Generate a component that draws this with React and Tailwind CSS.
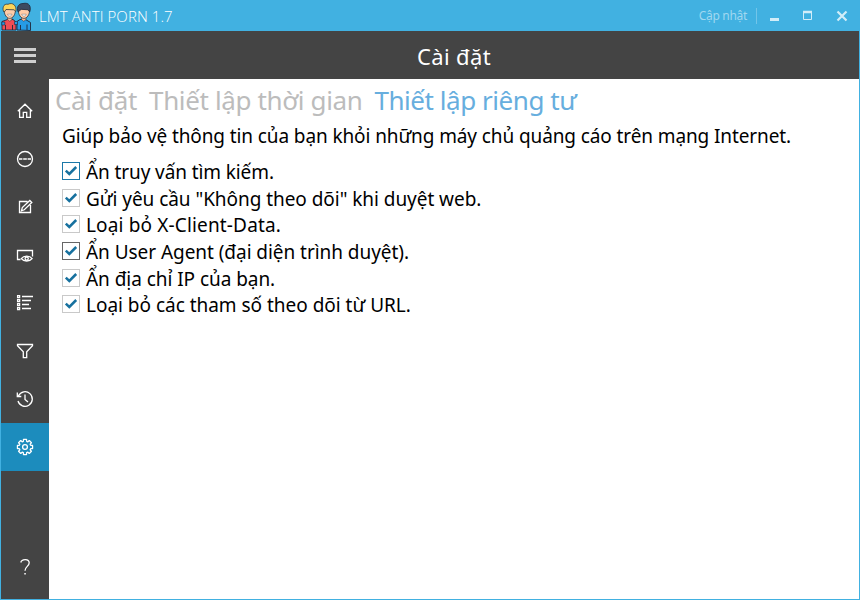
import React from "react";

const stroke = { fill: "none", stroke: "currentColor", strokeWidth: 1.3 };

function Glyph({ children }) {
  return (
    <svg width="18" height="18" viewBox="0 0 18 18" {...stroke}>
      {children}
    </svg>
  );
}

const gearPath = (() => {
  const pts = [];
  for (let i = 0; i < 8; i++) {
    const a = (i * Math.PI) / 4;
    [[-0.28, 5.9], [-0.2, 7.7], [0.2, 7.7], [0.28, 5.9]].forEach(([d, r]) => {
      pts.push(`${(9 + r * Math.sin(a + d)).toFixed(2)} ${(9 - r * Math.cos(a + d)).toFixed(2)}`);
    });
  }
  return `M${pts.join("L")}Z`;
})();

const icons = [
  <Glyph><path d="M1.8 9.2 9 2.2l7.2 7M3.6 7.8v7.6h3.7v-5h3.4v5h3.7V7.8" /></Glyph>,
  <Glyph>
    <circle cx="9" cy="9" r="7.5" />
    <path d="M3 9h3.400M7.200 9h3.600M11.600 9H15" strokeWidth="1.400" />
  </Glyph>,
  <Glyph>
    <path d="M11.500 3.500h-8v11h11V7M5.500 12.700l.8-3.200 7.500-7 2 2-7.500 7.300z" />
  </Glyph>,
  <Glyph>
    <path d="M4.5 13.5h-3v-9h15v6" />
    <path d="M5.3 12.6c2.5-3.2 8.3-3.2 10.8 0-2.5 3.2-8.3 3.2-10.8 0z" />
    <circle cx="10.7" cy="12.6" r="1.6" />
  </Glyph>,
  <Glyph>
    <path d="M1.6 1.6h2v2h-2zM1.6 5.6h2v2h-2zM1.6 9.6h2v2h-2zM1.6 13.6h2v2h-2z" />
    <path d="M6 2.5h11M6 6.5h9M6 10.5h7M6 14.5h9" />
  </Glyph>,
  <Glyph><path d="M1.5 2.5h15v1.3l-5.8 6v5.9H7.3V9.8l-5.8-6z" /></Glyph>,
  <Glyph>
    <path d="M2.5 5.7A7.3 7.3 0 1 1 2 11M1.3 2.5v4h4M9 4.6v4.9l3 2.6" />
  </Glyph>,
  <Glyph>
    <path d={gearPath} strokeLinejoin="round" />
    <circle cx="9" cy="9" r="2.4" />
  </Glyph>,
];

function People() {
  return (
    <svg width="30" height="30" viewBox="0 0 30 30" stroke="#20283a" strokeWidth="0.9" strokeLinejoin="round">
      <path d="M1 29v-8.500l5.500-2H12l3 2.500v8z" fill="#f14d55" />
      <path d="M16 29v-8.500l3-2h5.500l5 3v8z" fill="#269be5" />
      <path d="M.8 21h3v3h-3zM13.500 20.500h3v3h-3z" fill="#269be5" strokeWidth=".6" />
      <path d="M4.500 24V29M11.500 24v5M19.500 24v5M26 23.500V29" fill="none" />
      <path d="M6.500 15h4.500v3.500l-2.200 1.800-2.300-1.800zM20.500 15H25v3.500l-2.200 1.800-2.300-1.800z" fill="#f9bc94" strokeWidth=".5" />
      <path d="M3 8c0 12.500 11.500 12.500 11.500 0z" fill="#ffcca8" strokeWidth=".7" />
      <path d="M17.200 8c0 12.500 11.500 12.500 11.500 0z" fill="#ffcca8" strokeWidth=".7" />
      <path d="M2.500 10.500C.8 5 4 2.500 7 3.300 12 .8 16 5 14.800 10.500L13 8.800 5 8.500 3.800 10.500z" fill="#fcd45a" strokeWidth=".7" />
      <path d="M17.200 11C15 5.500 18 2.500 22 2.500 28 1.200 30.500 5 28.700 11L27 8.800l-6.500-.5-1.500 1z" fill="#3d4a60" strokeWidth=".8" />
      <path d="M6.500 13.200h4.500c-.5 2.500-4 2.500-4.500 0zM20.700 13.200h4.500c-.5 2.500-4 2.500-4.500 0z" fill="#fff" strokeWidth=".3" />
    </svg>
  );
}

const options = [
  { label: "Ẩn truy vấn tìm kiếm.", box: "border-[#1b78a8]", text: "tracking-[-0.1px]" },
  { label: 'Gửi yêu cầu "Không theo dõi" khi duyệt web.', box: "border-[#c9c9c9]", text: "tracking-[-0.05px]" },
  { label: "Loại bỏ X-Client-Data.", box: "border-[#c9c9c9]", text: "tracking-[0.15px]" },
  { label: "Ẩn User Agent (đại diện trình duyệt).", box: "border-[#666666]", text: "tracking-[-0.05px]" },
  { label: "Ẩn địa chỉ IP của bạn.", box: "border-[#c9c9c9]", text: "tracking-[-0.05px]" },
  { label: "Loại bỏ các tham số theo dõi từ URL.", box: "border-[#c9c9c9]", text: "tracking-[-0.02px]" },
];

function Option({ label, box, text }) {
  return (
    <label className="flex h-[26.6px] items-center whitespace-nowrap">
      <span className={`mb-[2px] flex size-[18px] shrink-0 items-center justify-center border bg-white ${box}`}>
        <svg width="14" height="14" viewBox="0 0 14 14" fill="none" stroke="#17719f" strokeWidth="2.5">
          <path d="M1.800 6.700 5.300 10 12.200 3" />
        </svg>
      </span>
      <span className={`ml-1.5 text-[19px] leading-[26px] text-black ${text}`}>{label}</span>
    </label>
  );
}

export default function App() {
  return (
    <div className="flex h-[600px] w-[860px] flex-col overflow-hidden border-x border-b border-[#41b1e1] bg-white font-['Noto_Sans',sans-serif]">
      <header className="flex h-[31px] shrink-0 items-center bg-[#41b1e1] text-white">
        <People />
        <span className="mt-px ml-2 whitespace-nowrap font-['Open_Sans',sans-serif] text-[15px] font-light tracking-[0.08px]">LMT ANTI PORN 1.7</span>
        <div className="ml-auto flex items-center">
          <span className="mt-px whitespace-nowrap text-[12px] tracking-[-0.3px] text-[#a0d8f0]">Cập nhật</span>
          <span className="ml-[9px] h-4 w-px bg-[#72c5e9]" />
          <svg className="ml-3" width="90" height="18" viewBox="0 0 90 18" fill="none" stroke="#d2edf8">
            <path d="M1 12.500h9" strokeWidth="3" />
            <path d="M34.500 4.500h8v8h-8z" />
            <path d="M34 5h9" strokeWidth="2.500" />
            <path d="M68.500 4.500l9 9M77.500 4.500l-9 9" strokeWidth="2.200" />
          </svg>
        </div>
      </header>
      <div className="flex h-12 shrink-0 items-center bg-[#444444] text-white">
        <div className="flex w-12 flex-col items-center gap-[3px] pt-px">
          <span className="h-[3px] w-[22px] bg-[#cfcfcf]" />
          <span className="h-[3px] w-[22px] bg-[#cfcfcf]" />
          <span className="h-[3px] w-[22px] bg-[#cfcfcf]" />
        </div>
        <h1 className="flex-1 pt-[3px] text-center text-[22px] tracking-[0.35px]">Cài đặt</h1>
      </div>
      <div className="flex min-h-0 flex-1">
        <nav className="flex w-12 shrink-0 flex-col bg-[#444444] pt-2 pb-2 text-white">
          {icons.map((icon, i) => (
            <button key={i} className={`flex h-12 w-12 shrink-0 items-center justify-center ${i === 7 ? "bg-[#1c8cbd]" : ""}`}>
              {icon}
            </button>
          ))}
          <button className="mt-auto flex h-12 w-12 shrink-0 items-center justify-center">
            <Glyph>
              <path d="M4.800 4.500C5.500 1 13 .2 13.200 4.800 13.200 8.500 9 8.300 9 12.800" />
              <path d="M8.300 15.800h1.500" strokeWidth="1.500" />
            </Glyph>
          </button>
        </nav>
        <main className="flex-1">
          <div className="flex h-[43px] items-center gap-3 pl-1.5 text-[26px] whitespace-nowrap text-[#bcbcbc]">
            <span className="tracking-[-0.35px]">Cài đặt</span>
            <span className="tracking-[-0.37px]">Thiết lập thời gian</span>
            <span className="tracking-[-0.45px] text-[#67aede]">Thiết lập riêng tư</span>
          </div>
          <p className="pl-[13px] text-[19px] leading-[28px] tracking-[-0.105px] whitespace-nowrap text-black">
            Giúp bảo vệ thông tin của bạn khỏi những máy chủ quảng cáo trên mạng Internet.
          </p>
          <div className="mt-[9px] flex flex-col pl-[13px]">
            {options.map((o) => (
              <Option key={o.label} {...o} />
            ))}
          </div>
        </main>
      </div>
    </div>
  );
}
